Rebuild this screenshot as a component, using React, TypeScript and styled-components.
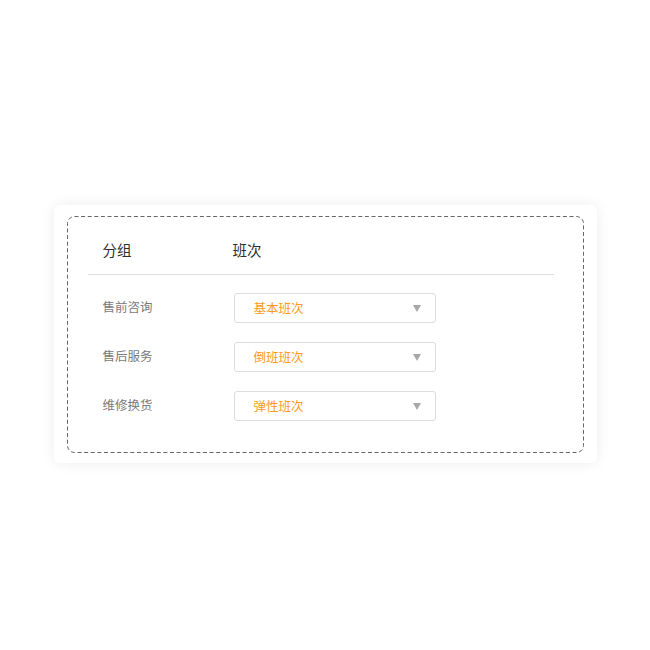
import React, { FC } from 'react'
import styled, { createGlobalStyle } from 'styled-components'

type Shift = {
  group: string
  shift: string
}

const shifts: Shift[] = [
  { group: '售前咨询', shift: '基本班次' },
  { group: '售后服务', shift: '倒班班次' },
  { group: '维修换货', shift: '弹性班次' },
]

// dashed frame drawn as svg so the dash length can be set
const dashFrame = `url("data:image/svg+xml,${encodeURIComponent(
  '<svg xmlns="http://www.w3.org/2000/svg" width="517" height="237"><rect x="0.5" y="0.5" width="516" height="236" rx="7" ry="7" fill="none" stroke="#666" stroke-width="1" stroke-dasharray="4 2.6"/></svg>'
)}")`

const GlobalStyle = createGlobalStyle`
  html, body {
    margin: 0;
    padding: 0;
    background: #fff;
    font-family: "Noto Sans CJK SC", "Noto Sans", sans-serif;
  }
`

const App: FC = () => {
  return (
    <Page>
      <GlobalStyle />
      <Card>
        <Dashed>
          <Table>
            <HeaderRow>
              <HeadCell>分组</HeadCell>
              <HeadCell>班次</HeadCell>
            </HeaderRow>
            <Body>
              {shifts.map((item) => (
                <Row key={item.group}>
                  <Label>{item.group}</Label>
                  <Select>
                    <SelectText>{item.shift}</SelectText>
                    <Caret />
                  </Select>
                </Row>
              ))}
            </Body>
          </Table>
        </Dashed>
      </Card>
    </Page>
  )
}

const Page = styled.div`
  display: flex;
  justify-content: center;
  align-items: flex-start;
  padding-top: 205px;
  min-height: 650px;
  box-sizing: border-box;
`

const Card = styled.div`
  width: 543px;
  box-sizing: border-box;
  padding: 11px 13px 10px;
  background: #fff;
  border-radius: 6px;
  box-shadow: 0 0 14px rgba(0, 0, 0, 0.08);
`

const Dashed = styled.div`
  width: 517px;
  height: 237px;
  box-sizing: border-box;
  background: ${dashFrame} no-repeat;
  padding: 21px 0 0 21px;
`

const Table = styled.div`
  width: 466px;
`

const HeaderRow = styled.div`
  display: grid;
  grid-template-columns: 145px 1fr;
  padding: 0 0 12px;
  border-bottom: 1px solid #ddd;
`

const HeadCell = styled.div`
  font-size: 14.5px;
  line-height: 25px;
  color: #2e2e2e;

  &:first-child {
    padding-left: 15px;
  }
`

const Body = styled.div`
  display: flex;
  flex-direction: column;
  gap: 19px;
  padding-top: 18px;
`

const Row = styled.div`
  display: grid;
  grid-template-columns: 146px 202px;
  align-items: center;
`

const Label = styled.div`
  padding: 0 0 3px 15px;
  font-size: 12.5px;
  line-height: 16px;
  color: #7a7a7a;
`

const Select = styled.div`
  height: 30px;
  box-sizing: border-box;
  border: 1px solid #ddd;
  border-radius: 3px;
  display: flex;
  align-items: center;
  justify-content: space-between;
  padding: 0 14px 1px 19px;
`

const SelectText = styled.span`
  font-size: 12.5px;
  line-height: 16px;
  color: #ff9a1a;
`

const Caret = styled.span`
  width: 0;
  height: 0;
  margin-top: 1px;
  border-left: 4px solid transparent;
  border-right: 4px solid transparent;
  border-top: 7px solid #a8a8a8;
`

export default App
